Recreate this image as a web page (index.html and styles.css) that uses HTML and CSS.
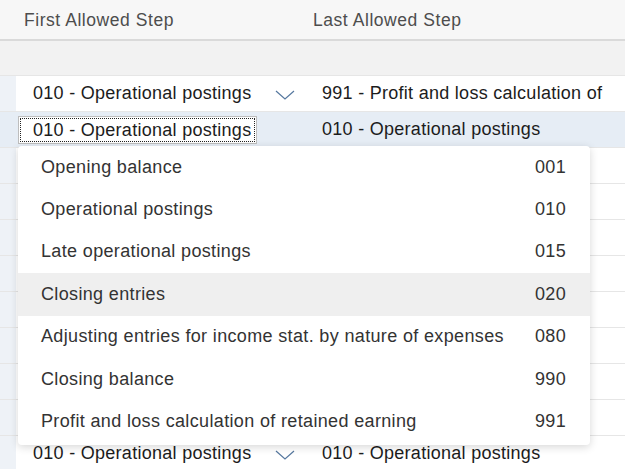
FILE: index.html
```html
<!DOCTYPE html>
<html lang="en">
<head>
  <meta charset="UTF-8">
  <title>Allowed Steps</title>
  <link rel="stylesheet" href="styles.css">
</head>
<body>
  <div class="table">
    <div class="head">
      <div class="sel"></div>
      <div class="cell c1">First Allowed Step</div>
      <div class="cell c2">Last Allowed Step</div>
    </div>
    <div class="row blank">
      <div class="sel"></div>
    </div>
    <div class="row">
      <div class="sel"></div>
      <div class="cell c1 combo">
        <span>010 - Operational postings</span>
        <svg class="chev" width="20" height="10" viewBox="0 0 20 10"><path d="M1 1 L10 9 L19 1" fill="none" stroke="#56789f" stroke-width="1.2"/></svg>
      </div>
      <div class="cell c2">991 - Profit and loss calculation of</div>
    </div>
    <div class="row selected">
      <div class="sel"></div>
      <div class="cell c1">
        <div class="input"><span>010 - Operational postings</span></div>
      </div>
      <div class="cell c2">010 - Operational postings</div>
    </div>
    <div class="row"><div class="sel"></div></div>
    <div class="row"><div class="sel"></div></div>
    <div class="row"><div class="sel"></div></div>
    <div class="row"><div class="sel"></div></div>
    <div class="row"><div class="sel"></div></div>
    <div class="row"><div class="sel"></div></div>
    <div class="row"><div class="sel"></div></div>
    <div class="row"><div class="sel"></div></div>
    <div class="row">
      <div class="sel"></div>
      <div class="cell c1 combo">
        <span>010 - Operational postings</span>
        <svg class="chev" width="20" height="10" viewBox="0 0 20 10"><path d="M1 1 L10 9 L19 1" fill="none" stroke="#56789f" stroke-width="1.2"/></svg>
      </div>
      <div class="cell c2">010 - Operational postings</div>
    </div>
  </div>

  <ul class="popover">
    <li><span>Opening balance</span><span>001</span></li>
    <li><span>Operational postings</span><span>010</span></li>
    <li><span>Late operational postings</span><span>015</span></li>
    <li class="hover"><span>Closing entries</span><span>020</span></li>
    <li><span>Adjusting entries for income stat. by nature of expenses</span><span>080</span></li>
    <li><span>Closing balance</span><span>990</span></li>
    <li><span>Profit and loss calculation of retained earning</span><span>991</span></li>
  </ul>
</body>
</html>
```

FILE: styles.css
```css
* {
  margin: 0;
  padding: 0;
  box-sizing: border-box;
}
body {
  font-family: "Liberation Sans", Arial, sans-serif;
  width: 625px;
  height: 469px;
  overflow: hidden;
  position: relative;
  background: #fff;
  color: #1c1c1c;
}
.table {
  width: 625px;
}
.head, .row {
  display: flex;
}
.head {
  height: 41px;
  background: #f7f7f7;
  border-bottom: 2px solid #dadada;
  color: #4d4d4d;
  font-size: 17.5px;
  letter-spacing: 0.55px;
  padding-top: 1px;
}
.head .cell {
  padding-left: 8px;
}
.row {
  height: 36px;
  border-bottom: 1px solid #e6e6e6;
  font-size: 18px;
  letter-spacing: 0.28px;
}
.row.blank {
  height: 35px;
  background: #f2f2f2;
}
.row.blank .sel {
  background: #f2f2f2;
}
.sel {
  width: 16px;
  flex-shrink: 0;
  background: #eef2f7;
}
.head .sel {
  background: #f7f7f7;
}
.cell {
  display: flex;
  align-items: center;
  white-space: nowrap;
  overflow: hidden;
}
.c1 {
  width: 289px;
  padding-left: 17px;
  flex-shrink: 0;
}
.c2 {
  width: 302px;
  padding-left: 17px;
}
.combo .chev {
  margin-left: 24px;
  margin-top: 2px;
}
.row.selected {
  background: #e6edf5;
}
.row.selected .sel {
  background: #e6edf5;
}
.row.selected .c1 {
  padding-left: 2px;
}
.input {
  width: 239px;
  height: 28px;
  background: #fff;
  border: 1px solid #bdbdbd;
  padding: 1px;
}
.input span {
  display: block;
  height: 100%;
  border: 1px dotted #222;
  padding-left: 12px;
  line-height: 23px;
}
.popover {
  position: absolute;
  left: 18px;
  top: 146px;
  width: 572px;
  list-style: none;
  background: #fff;
  border-radius: 4px;
  box-shadow: 0 2px 8px rgba(0, 0, 0, 0.16);
  padding-bottom: 2px;
  color: #333;
  font-size: 18px;
  letter-spacing: 0.35px;
}
.popover li {
  display: flex;
  justify-content: space-between;
  align-items: center;
  height: 42.4px;
  padding: 0 24px 0 23px;
}
.popover li.hover {
  background: #efefef;
}
```
